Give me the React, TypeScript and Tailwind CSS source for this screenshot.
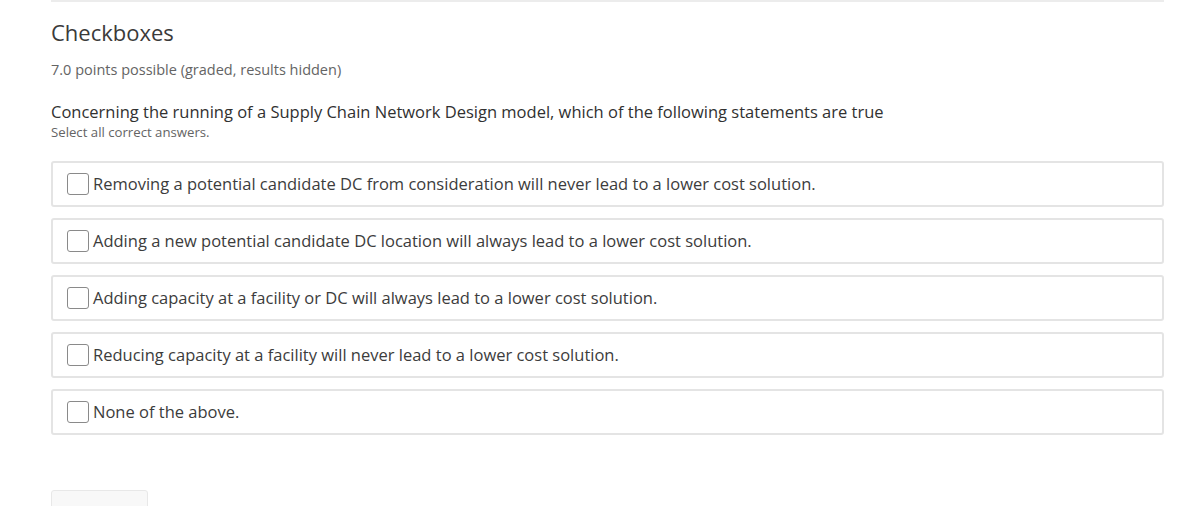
const options = [
  'Removing a potential candidate DC from consideration will never lead to a lower cost solution.',
  'Adding a new potential candidate DC location will always lead to a lower cost solution.',
  'Adding capacity at a facility or DC will always lead to a lower cost solution.',
  'Reducing capacity at a facility will never lead to a lower cost solution.',
  'None of the above.',
]

export default function App() {
  return (
    <div className="w-[1194px] h-[506px] overflow-hidden bg-white font-['Open_Sans',sans-serif] text-[#313131]">
      <div className="ml-[51px] w-[1113px]">
        <div className="h-[2px] bg-[#ececec]" />
        <h2 className="mt-[17px] text-[22px] leading-[26px] text-[#3a3a3a]">Checkboxes</h2>
        <p className="mt-[15px] text-[14.5px] leading-[20px] text-[#646464]">7.0 points possible (graded, results hidden)</p>
        <p className="mt-[21px] text-[16.5px] leading-[22px] text-[#313131]">
          Concerning the running of a Supply Chain Network Design model, which of the following statements are true
        </p>
        <p className="mt-[1px] text-[13.2px] leading-[17px] text-[#646464]">Select all correct answers.</p>
        <div className="mt-[20px] flex flex-col gap-[11px]">
          {options.map((o) => (
            <label
              key={o}
              className="h-[46px] flex items-center pl-[14px] border-2 border-[#e4e4e4] rounded-[3px] cursor-pointer"
            >
              <span className="w-[22px] h-[22px] border border-[#8a8a8a] rounded-[3px] bg-white shrink-0" />
              <span className="ml-[4px] text-[16.5px] text-[#3c3c3c]">{o}</span>
            </label>
          ))}
        </div>
        <div className="mt-[55px] w-[97px] h-[30px] border border-[#e8e8e8] rounded-[3px] bg-[#f8f8f8]" />
      </div>
    </div>
  )
}
